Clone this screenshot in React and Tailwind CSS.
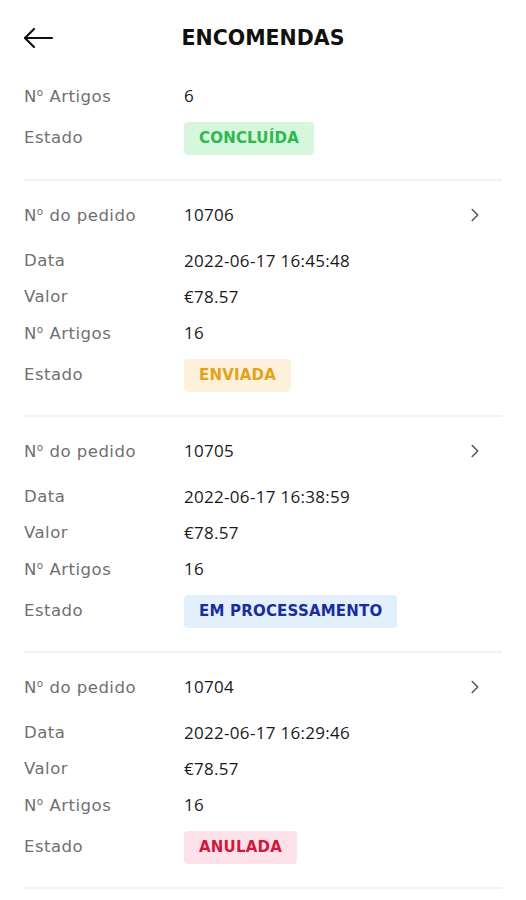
import { ChevronRight } from "lucide-react";

const orders = [
  { id: "10706", date: "2022-06-17 16:45:48", value: "€78.57", items: "16", status: "ENVIADA", badge: "bg-[#fdf1dc] text-[#e3a21c]" },
  { id: "10705", date: "2022-06-17 16:38:59", value: "€78.57", items: "16", status: "EM PROCESSAMENTO", badge: "bg-[#e1f0fb] text-[#1c2c9c]" },
  { id: "10704", date: "2022-06-17 16:29:46", value: "€78.57", items: "16", status: "ANULADA", badge: "bg-[#fde2ea] text-[#d4163c]" },
];

// "º" drawn from Open Sans: DejaVu underlines the ordinal
function Label({ text }) {
  if (!text.startsWith("Nº")) return text;
  return (
    <>
      N<span className="font-['Open_Sans',sans-serif] text-[17px]">º</span>
      {text.slice(2)}
    </>
  );
}

function Row({ label, children, tall }) {
  return (
    <div className={`flex items-center ${tall ? "h-[48px]" : "h-[36px]"}`}>
      <span className="w-[160px] text-[16.5px] tracking-[0.5px] text-[#707070] font-['DejaVu_Sans',sans-serif]">
        <Label text={label} />
      </span>
      <div className="flex-1 text-[17px] tracking-[0.3px] text-[#1a1a1a]">{children}</div>
    </div>
  );
}

function Badge({ className, children }) {
  return (
    <span className={`inline-flex h-[33px] items-center rounded-[4px] px-[15px] text-[15px] font-bold font-['DejaVu_Sans',sans-serif] tracking-[0.2px] ${className}`}>
      {children}
    </span>
  );
}

export default function App() {
  return (
    <div className="w-[526px] h-[900px] overflow-hidden bg-white font-['Open_Sans',sans-serif]">
      <header className="relative flex h-[76px] items-center justify-center">
        <svg className="absolute left-[22px] top-[26px]" width="32" height="24" viewBox="0 0 32 24" fill="none" stroke="#111" strokeWidth="2.2" strokeLinecap="round" strokeLinejoin="round">
          <path d="M3 12h27" />
          <path d="M12 3l-9 9 9 9" />
        </svg>
        <h1 className="text-[20.5px] font-bold text-[#111] font-['DejaVu_Sans',sans-serif]">ENCOMENDAS</h1>
      </header>

      <div className="mx-6 mt-[2px]">
        <Row label="Nº Artigos">6</Row>
        <Row label="Estado" tall>
          <Badge className="bg-[#d6f6de] text-[#2fb84d]">CONCLUÍDA</Badge>
        </Row>
        <div className="h-[17px]" />
      </div>

      {orders.map((o) => (
        <div key={o.id} className="mx-6 border-t-2 border-[#f3f3f3] pt-[16px] pb-[16px]">
          <Row label="Nº do pedido">
            <div className="flex items-center justify-between">
              <span>{o.id}</span>
              <ChevronRight size={22} strokeWidth={1.7} className="mr-[16px] text-[#555]" />
            </div>
          </Row>
          <div className="h-[10px]" />
          <Row label="Data">{o.date}</Row>
          <Row label="Valor">{o.value}</Row>
          <Row label="Nº Artigos">{o.items}</Row>
          <Row label="Estado" tall>
            <Badge className={o.badge}>{o.status}</Badge>
          </Row>
        </div>
      ))}
      <div className="mx-6 border-t-2 border-[#f3f3f3]" />
    </div>
  );
}
